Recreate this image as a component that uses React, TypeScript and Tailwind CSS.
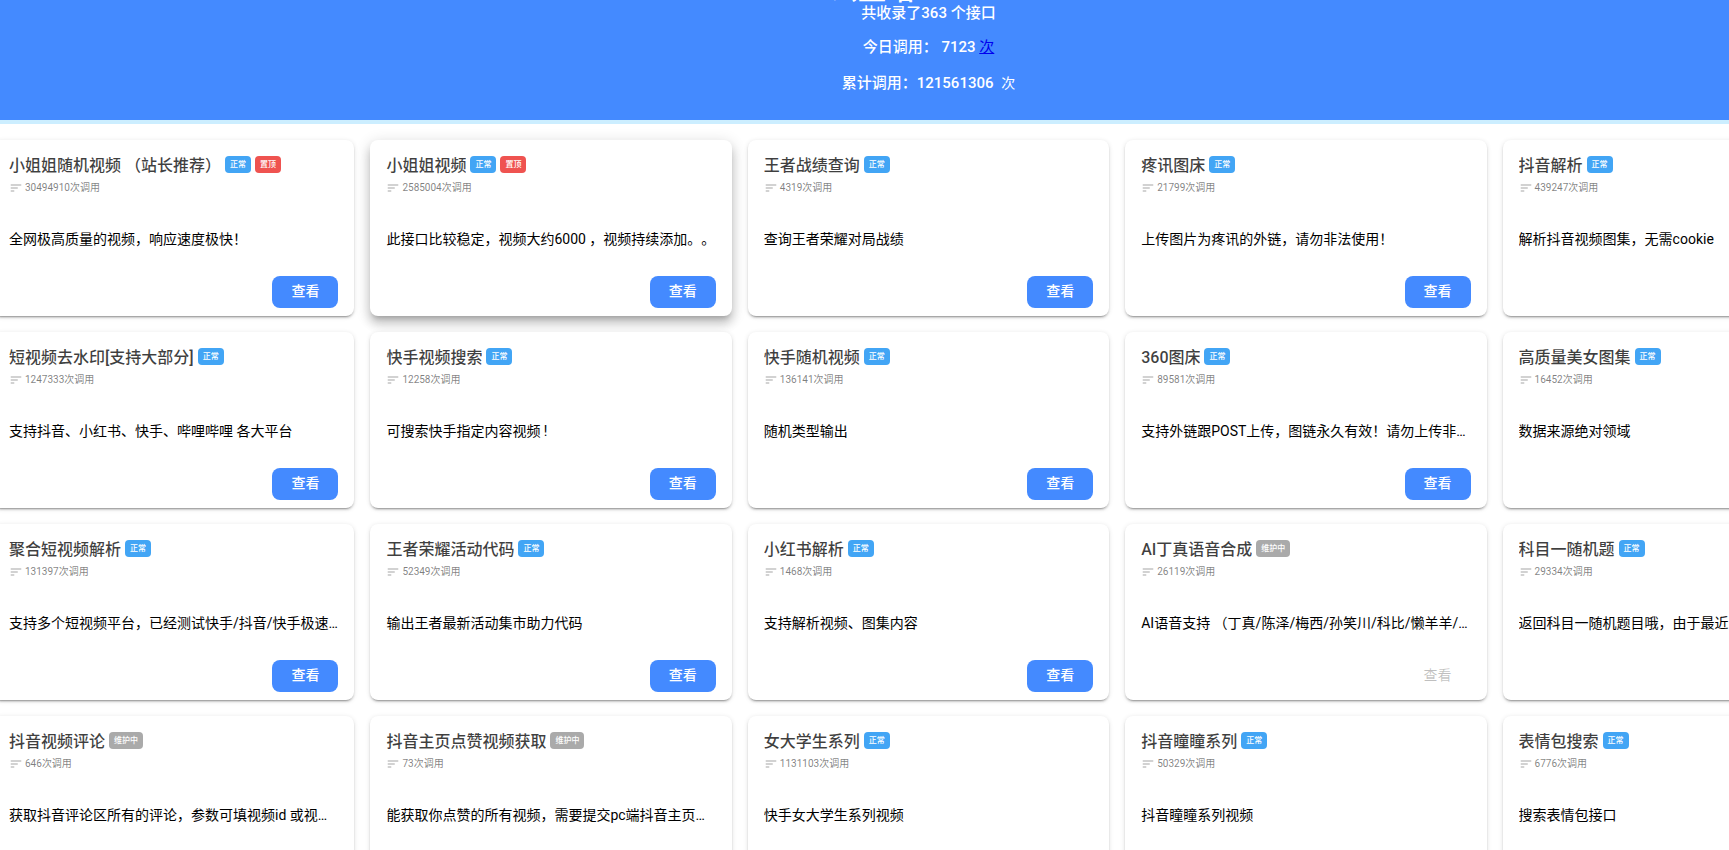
type Status = 'ok' | 'maintenance';

interface Api {
  name: string;
  calls: number;
  desc: string;
  status?: Status;
  pinned?: boolean;
  raised?: boolean;
}

const apis: Api[] = [
  { name: '小姐姐随机视频 （站长推荐）', calls: 30494910, desc: '全网极高质量的视频，响应速度极快！', pinned: true },
  { name: '小姐姐视频', calls: 2585004, desc: '此接口比较稳定，视频大约6000 ，视频持续添加。。', pinned: true, raised: true },
  { name: '王者战绩查询', calls: 4319, desc: '查询王者荣耀对局战绩' },
  { name: '疼讯图床', calls: 21799, desc: '上传图片为疼讯的外链，请勿非法使用！' },
  { name: '抖音解析', calls: 439247, desc: '解析抖音视频图集，无需cookie' },
  { name: '短视频去水印[支持大部分]', calls: 1247333, desc: '支持抖音、小红书、快手、哔哩哔哩 各大平台' },
  { name: '快手视频搜索', calls: 12258, desc: '可搜索快手指定内容视频 !' },
  { name: '快手随机视频', calls: 136141, desc: '随机类型输出' },
  { name: '360图床', calls: 89581, desc: '支持外链跟POST上传，图链永久有效！请勿上传非…' },
  { name: '高质量美女图集', calls: 16452, desc: '数据来源绝对领域' },
  { name: '聚合短视频解析', calls: 131397, desc: '支持多个短视频平台，已经测试快手/抖音/快手极速…' },
  { name: '王者荣耀活动代码', calls: 52349, desc: '输出王者最新活动集市助力代码' },
  { name: '小红书解析', calls: 1468, desc: '支持解析视频、图集内容' },
  { name: 'AI丁真语音合成', calls: 26119, desc: 'AI语音支持 （丁真/陈泽/梅西/孙笑川/科比/懒羊羊/…', status: 'maintenance' },
  { name: '科目一随机题', calls: 29334, desc: '返回科目一随机题目哦，由于最近…' },
  { name: '抖音视频评论', calls: 646, desc: '获取抖音评论区所有的评论，参数可填视频id 或视…', status: 'maintenance' },
  { name: '抖音主页点赞视频获取', calls: 73, desc: '能获取你点赞的所有视频，需要提交pc端抖音主页…', status: 'maintenance' },
  { name: '女大学生系列', calls: 1131103, desc: '快手女大学生系列视频' },
  { name: '抖音瞳瞳系列', calls: 50329, desc: '抖音瞳瞳系列视频' },
  { name: '表情包搜索', calls: 6776, desc: '搜索表情包接口' },
];

const raisedShadow =
  'shadow-[0_5px_5px_-3px_rgba(0,0,0,0.2),0_8px_10px_1px_rgba(0,0,0,0.14),0_3px_14px_2px_rgba(0,0,0,0.12)]';
const flatShadow =
  'shadow-[0_3px_1px_-2px_rgba(0,0,0,0.2),0_2px_2px_0_rgba(0,0,0,0.14),0_1px_5px_0_rgba(0,0,0,0.12)]';

const badgeBase = 'shrink-0 rounded px-[5px] text-[8px] leading-[17px] font-medium text-white';

function SortIcon() {
  return (
    <svg viewBox="0 0 24 24" className="size-3.5 opacity-70" fill="currentColor" aria-hidden="true">
      <path d="M3 18h6v-1.600H3v1.600zM3 6v1.600h18V6H3zm0 6.800h12v-1.600H3v1.600z" />
    </svg>
  );
}

function ApiCard({ api }: { api: Api }) {
  const down = api.status === 'maintenance';
  return (
    <article className={`flex h-44 min-w-0 flex-col rounded-lg bg-white px-4 pt-4 pb-2 ${api.raised ? raisedShadow : flatShadow}`}>
      <div className="flex items-start gap-1">
        <h2 className="truncate text-base leading-5 font-medium text-black/75">{api.name}</h2>
        {down ? (
          <span className={`${badgeBase} bg-[#aaaaaa]`}>维护中</span>
        ) : (
          <span className={`${badgeBase} bg-[#42a5f5]`}>正常</span>
        )}
        {api.pinned && <span className={`${badgeBase} bg-[#ef5350]`}>置顶</span>}
      </div>
      <p className="mt-1 flex items-center gap-0.5 text-[10px] leading-4 text-black/50">
        <SortIcon />
        {api.calls}次调用
      </p>
      <p className="mt-[31px] truncate text-sm leading-6 text-black">{api.desc}</p>
      <button
        type="button"
        disabled={down}
        className="mt-auto h-8 w-[66px] self-end rounded-lg bg-[#448aff] pb-0.5 text-sm font-medium text-white disabled:bg-transparent disabled:font-normal disabled:text-black/25"
      >
        查看
      </button>
    </article>
  );
}

export default function App() {
  return (
    <div className="h-screen overflow-hidden bg-white font-[Roboto,'Noto_Sans_CJK_SC',sans-serif] [text-spacing-trim:space-all]">
      <div className="-ml-[7px] w-[calc(100%+142px)]">
        <header className="flex h-[124px] flex-col items-center border-b-4 border-[#cceeff] bg-[#448aff] text-[15px] leading-5 font-medium text-white">
          <h1 className="-mt-[21px] text-[28px] leading-6">公益站 Free API</h1>
          <p>共收录了363 个接口</p>
          <p className="mt-3.5">
            今日调用： 7123{' '}
            <a href="#today" className="font-normal text-[#0000ee] underline">次</a>
          </p>
          <p className="mt-4">
            累计调用：121561306 <span className="ml-1 text-sm font-normal">次</span>
          </p>
        </header>
        <main className="mt-4 grid grid-cols-5 gap-4">
          {apis.map((api) => (
            <ApiCard key={api.name} api={api} />
          ))}
        </main>
      </div>
    </div>
  );
}
